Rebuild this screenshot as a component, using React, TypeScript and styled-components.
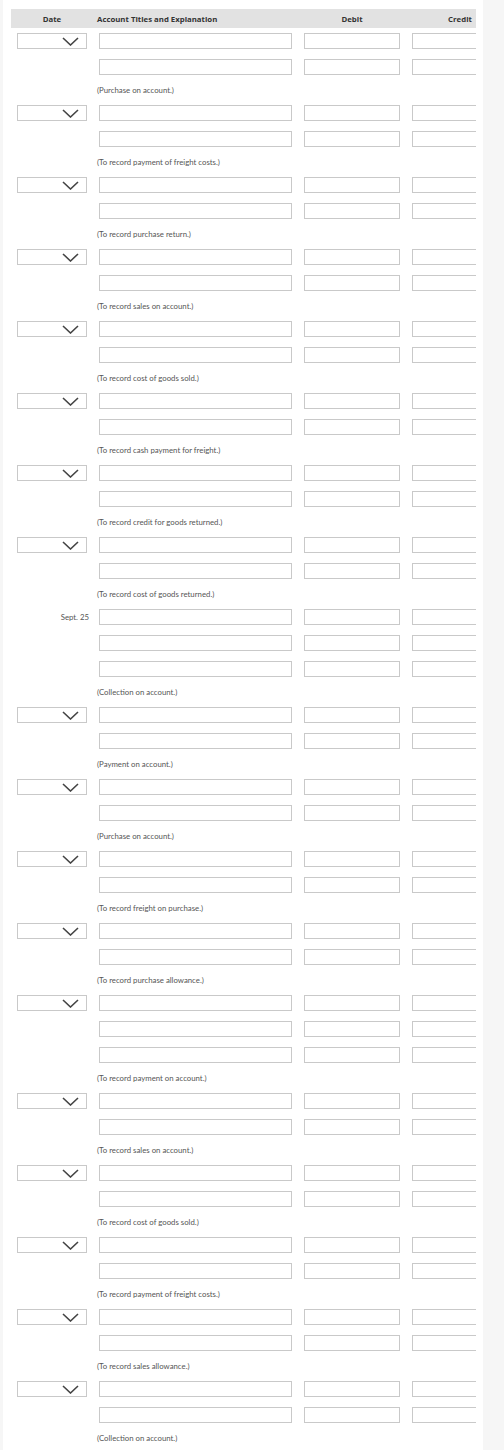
import React from 'react'
import styled, { createGlobalStyle } from 'styled-components'

const GlobalStyle = createGlobalStyle`
  html, body {
    margin: 0;
    padding: 0;
    background: #f6f6f6;
  }
  body {
    font-family: "Lato", "Open Sans", sans-serif;
  }
`

type Entry = {
  date?: string
  rows: number
  note: string
}

const entries: Entry[] = [
  { rows: 2, note: '(Purchase on account.)' },
  { rows: 2, note: '(To record payment of freight costs.)' },
  { rows: 2, note: '(To record purchase return.)' },
  { rows: 2, note: '(To record sales on account.)' },
  { rows: 2, note: '(To record cost of goods sold.)' },
  { rows: 2, note: '(To record cash payment for freight.)' },
  { rows: 2, note: '(To record credit for goods returned.)' },
  { rows: 2, note: '(To record cost of goods returned.)' },
  { date: 'Sept. 25', rows: 3, note: '(Collection on account.)' },
  { rows: 2, note: '(Payment on account.)' },
  { rows: 2, note: '(Purchase on account.)' },
  { rows: 2, note: '(To record freight on purchase.)' },
  { rows: 2, note: '(To record purchase allowance.)' },
  { rows: 3, note: '(To record payment on account.)' },
  { rows: 2, note: '(To record sales on account.)' },
  { rows: 2, note: '(To record cost of goods sold.)' },
  { rows: 2, note: '(To record payment of freight costs.)' },
  { rows: 2, note: '(To record sales allowance.)' },
  { rows: 2, note: '(Collection on account.)' },
]

const Panel = styled.div`
  margin-left: 3px;
  width: 480px;
  min-height: 1450px;
  background: #fff;
`

const Clip = styled.div`
  margin-left: 8px;
  width: 465px;
  padding-top: 9px;
  overflow: hidden;
`

const Grid = styled.div`
  display: grid;
  grid-template-columns: 70px 193px 96px 96px;
  column-gap: 12px;
  padding-left: 6px;
  width: 520px;
`

const HeadRow = styled(Grid)`
  width: 459px;
  height: 19px;
  align-items: center;
  background: #e2e2e2;
  font-family: "Open Sans", "Lato", sans-serif;
  font-weight: 700;
  font-size: 7.8px;
  color: #333;
  margin-bottom: 5px;
  overflow: hidden;
`

const HeadCell = styled.div<{ $align?: 'left' | 'center' }>`
  text-align: ${p => p.$align || 'center'};
  white-space: nowrap;
  margin-left: ${p => (p.$align === 'left' ? '-2px' : '0')};
`

const EntryBlock = styled.div`
  display: flex;
  flex-direction: column;
  gap: 10px;
`

const Row = styled(Grid)`
  height: 16px;
  align-items: stretch;
`

const Box = styled.input`
  box-sizing: border-box;
  width: 100%;
  height: 16px;
  margin: 0;
  padding: 0 4px;
  border: 1px solid #c9c9c9;
  border-radius: 0;
  background: #fff;
  outline: none;
  font-size: 7px;
`

const Select = styled.div`
  box-sizing: border-box;
  height: 16px;
  border: 1px solid #c9c9c9;
  background: #fff;
  display: flex;
  align-items: center;
  justify-content: flex-end;
  padding-right: 7px;
`

const DateText = styled.div`
  font-size: 7.8px;
  color: #555;
  text-align: right;
  line-height: 16px;
  margin-right: -2px;
`

const Note = styled.div`
  height: 30px;
  line-height: 30px;
  margin-top: -10px;
  padding-left: 86px;
  font-size: 7.8px;
  color: #555;
  white-space: nowrap;
`

const Chevron = () => (
  <svg width="17" height="9" viewBox="0 0 17 9">
    <polyline points="1,1 8.5,8 16,1" fill="none" stroke="#444" strokeWidth="1.6" />
  </svg>
)

const JournalEntry = ({ entry }: { entry: Entry }) => (
  <EntryBlock>
    {Array.from({ length: entry.rows }).map((_, i) => (
      <Row key={i}>
        {i === 0 ? (
          entry.date ? (
            <DateText>{entry.date}</DateText>
          ) : (
            <Select>
              <Chevron />
            </Select>
          )
        ) : (
          <div />
        )}
        <Box />
        <Box />
        <Box />
      </Row>
    ))}
    <Note>{entry.note}</Note>
  </EntryBlock>
)

export default function App() {
  return (
    <>
      <GlobalStyle />
      <Panel>
        <Clip>
          <HeadRow>
            <HeadCell>Date</HeadCell>
            <HeadCell $align="left">Account Titles and Explanation</HeadCell>
            <HeadCell>Debit</HeadCell>
            <HeadCell>Credit</HeadCell>
          </HeadRow>
          {entries.map((e, i) => (
            <JournalEntry key={i} entry={e} />
          ))}
        </Clip>
      </Panel>
    </>
  )
}
